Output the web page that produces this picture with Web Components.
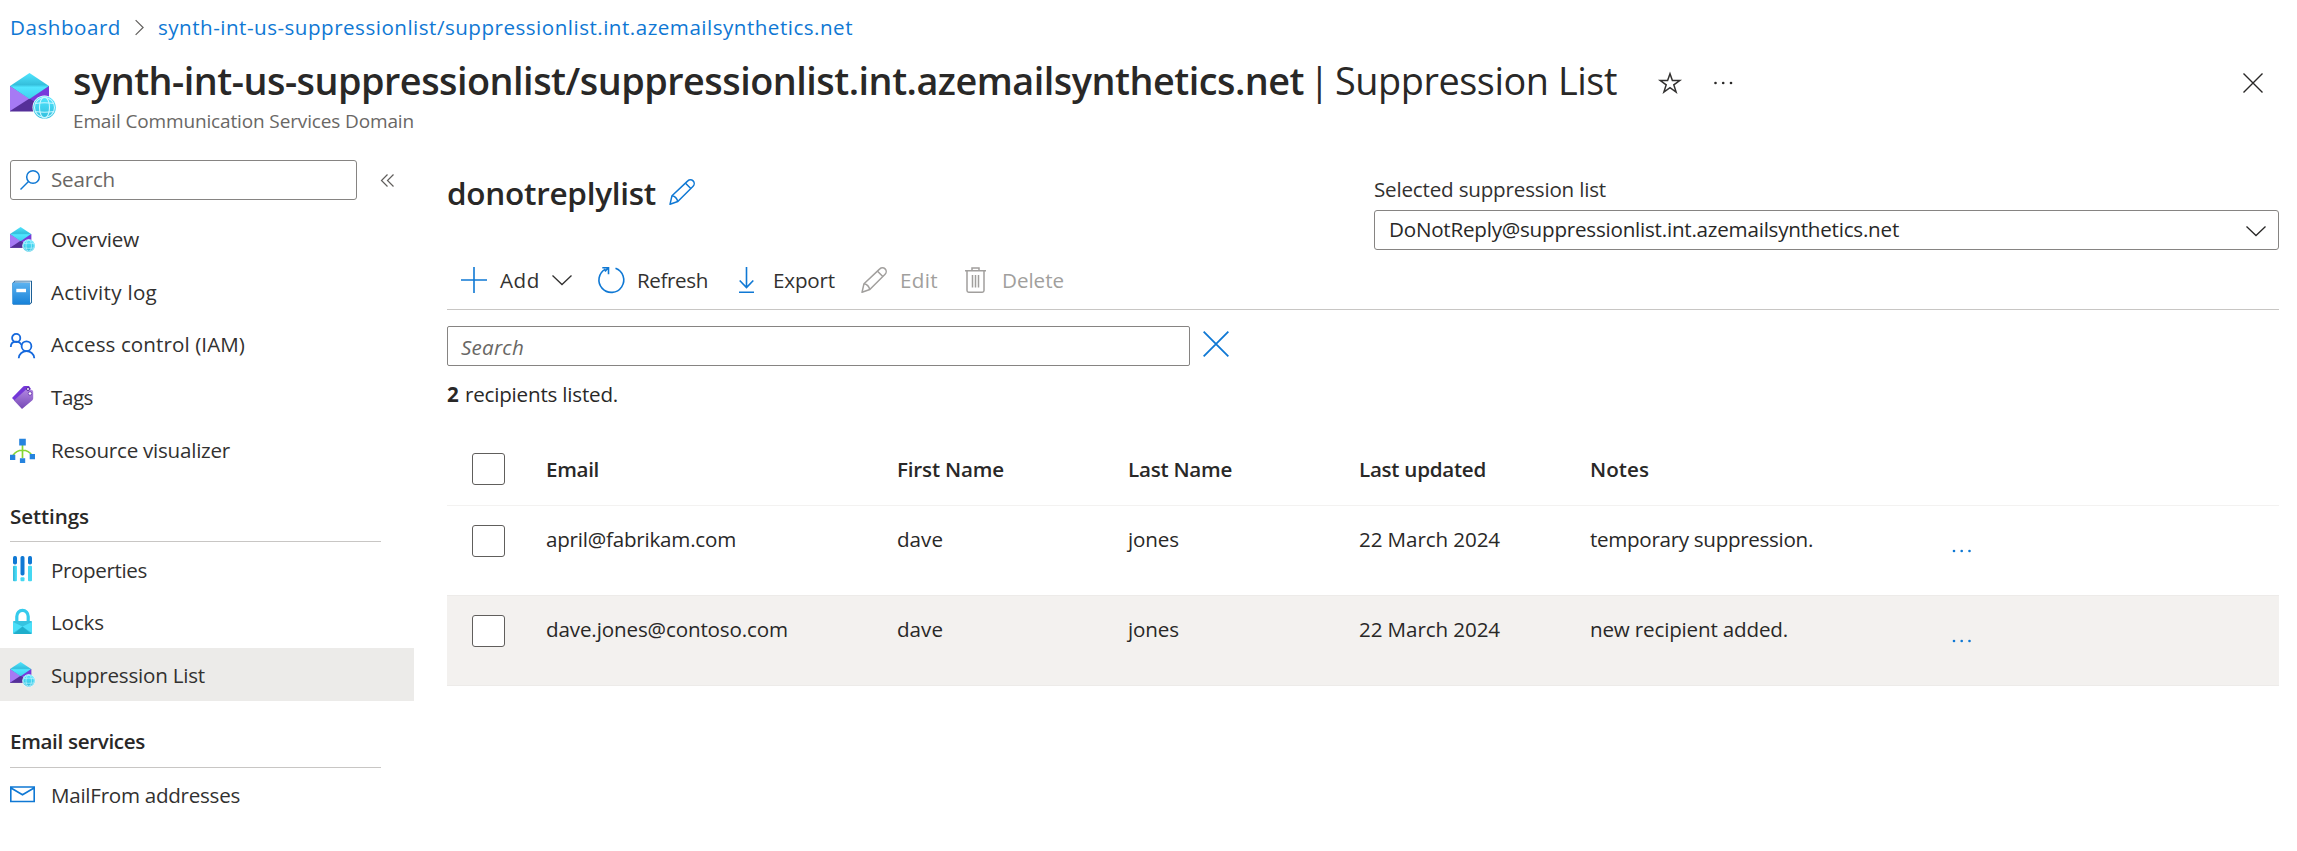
<!DOCTYPE html>
<html lang="en">
<head>
<meta charset="utf-8">
<title>Suppression List</title>
<style>
html,body{margin:0;background:#fff}
body{width:2297px;height:851px;overflow:hidden;font-family:"Open Sans","Noto Sans",sans-serif;font-size:20.6px;color:#323130}
</style>
</head>
<body>
<portal-page></portal-page>
<script>
const define = (name, css, html, setup) => customElements.define(name, class extends HTMLElement {
  connectedCallback() {
    if (this.shadowRoot) return;
    const root = this.attachShadow({ mode: 'open' });
    root.innerHTML = `<style>*{box-sizing:border-box}${css}</style>${typeof html === 'function' ? html(this) : html}`;
    if (setup) setup(this, root);
  }
});

// Single-line label tracked to an exact measure.
define('fit-text', ':host{display:inline-block;white-space:nowrap;flex:none}span{display:inline-block}', '<span><slot></slot></span>', (el, root) => {
  const w = +el.getAttribute('w'), span = root.querySelector('span');
  const n = el.textContent.length;
  el.style.width = w + 'px';
  span.style.letterSpacing = ((w - span.getBoundingClientRect().width) / n) + 'px';
});

const pencil = '<g fill="none" stroke="currentColor" stroke-width="1.5" stroke-linejoin="round"><path d="M1 25.3l2-8.600L18.800 1.900a3.700 3.700 0 0 1 5.300 5.300L8.800 22.500z"/><path d="M3 16.700q4.600 .8 5.800 5.800M16.500 4.200l5.300 5.300"/></g>';
const mail = `<defs><linearGradient id="a" x1="0" y1="0" x2="0" y2="1"><stop offset="0" stop-color="#50e6ff"/><stop offset=".45" stop-color="#35bfdc"/><stop offset=".55" stop-color="#50e6ff"/><stop offset="1" stop-color="#40d0ee"/></linearGradient><linearGradient id="g" x1="0" y1="0" x2="0" y2="1"><stop offset="0" stop-color="#50e6ff"/><stop offset="1" stop-color="#32bedd"/></linearGradient></defs>
<path d="M0 13h39v25.500H0z" fill="#552f99"/><path d="M39 13v25L19.500 25.500z" fill="#773adc"/><path d="M0 13v25L19.500 25.500z" fill="#a67af4"/><path d="M0 13L19.500 0 39 13 19.500 26z" fill="url(#a)"/>
<circle cx="34.500" cy="34.500" r="12" fill="#fff"/><circle cx="34.500" cy="34.500" r="11.300" fill="url(#g)"/><g fill="none" stroke="#c9f6ff" stroke-width="1.100"><ellipse cx="34.500" cy="34.500" rx="5" ry="10.500"/><circle cx="34.500" cy="34.500" r="10"/><path d="M25 30.500q9.500 -1.500 19 0M25 38.500q9.500 1.500 19 0"/></g>`;
const icons = {
  mail: ['0 0 46 46', mail],
  book: ['0 0 25 25', '<defs><linearGradient id="a" x1="0" y1="0" x2="0" y2="1"><stop offset="0" stop-color="#5bb2f0"/><stop offset="1" stop-color="#1681d8"/></linearGradient></defs><path d="M2.300 3.500L4.500.8H22v22l-2 1.700H3z" fill="#1b5f96"/><path d="M4 2.400L5 1.600h16v20.700l-1 1V2.800z" fill="#eef6fc"/><path d="M2.300 2.800H20v21.700H3.500a1.200 1.200 0 0 1-1.200-1.200z" fill="url(#a)"/><path d="M6.300 8.800H16v3.400H6.300z" fill="#fff"/>'],
  people: ['0 0 25 25', '<g fill="none" stroke="#1468dd" stroke-width="1.800"><circle cx="6.200" cy="5" r="4.100"/><circle cx="16.500" cy="13.200" r="4.900"/><path d="M.8 14c0-6.800 8.700-6.900 10.600-2M8.700 25.300c.5-9.500 15.100-9.500 15.600 0"/></g>'],
  tag: ['0 0 25 25', '<defs><linearGradient id="a" x1="0" y1="0" x2="0" y2="1"><stop offset="0" stop-color="#b287e2"/><stop offset="1" stop-color="#7548b5"/></linearGradient></defs><path d="M2 13L12.500 2.200Q13.400 1 15 1h4l2 3L5 16z" fill="#7436d8"/><path d="M4 15.500L16 4.500q1-.8 2.400-.4L22 5q1.200.4 1.200 1.800v6.500q0 1-.8 1.900L12 24z" fill="url(#a)"/><circle cx="18" cy="4" r="1.500" fill="#fff" stroke="#552b9a"/><circle cx="20" cy="8.500" r="1.800" fill="#fff" stroke="#7548b5"/>'],
  tree: ['0 0 25 25', '<g fill="none" stroke="#86d633" stroke-width="1.700"><path d="M12.500 7v13M3 17.500c4-7 15-7 19 0"/></g><g fill="#2583de"><path d="M9.200.8h6.600v6.600H9.200zM0 16.700h5.300V22H0zM19.700 16h5.300v5.300h-5.300zM9.900 20.300h5.300v4.700H9.900z"/></g>'],
  props: ['0 0 25 25', '<defs><linearGradient id="a"><stop offset="0" stop-color="#32b5d5"/><stop offset="1" stop-color="#50e6ff"/></linearGradient></defs><g fill="#0f78d4"><rect x="3" y="0" width="4" height="8.500" rx="1.700"/><rect x="10.500" y="0" width="4" height="19.500" rx="1.700"/><rect x="18" y="0" width="4" height="8.500" rx="1.700"/></g><rect x="3" y="9.800" width="4" height="15.500" rx="1" fill="url(#a)"/><rect x="10.500" y="21.200" width="4" height="4" rx="1" fill="#45d8f2"/><rect x="18" y="9.800" width="4" height="15.500" rx="1" fill="#45d8f2"/>'],
  lock: ['0 0 25 25', '<path d="M6.800 13V7.500a5.600 6 0 0 1 11.400 0V13" fill="none" stroke="#35cbec" stroke-width="3.200"/><rect x="3" y="12" width="19" height="13" rx="1" fill="#36c3e0"/><path d="M3 13v11l9.500-6.500zM22 13v11l-9.500-6.500z" fill="#50e6ff" opacity=".8"/><path d="M3.500 25l9-7.300 9 7.300z" fill="#1faecb"/>'],
  envelope: ['0 0 25 25', '<path d="M.8 5h23.400v14.500H.8zM1 6l11.500 6.700L24 6" fill="none" stroke="#0f78d4" stroke-width="1.600"/>'],
  pencil: ['0 0 26 26', pencil],
  search: ['0 0 20 20', '<g fill="none" stroke="#0f78d4" stroke-width="1.500"><circle cx="13" cy="7" r="6.300"/><path d="M8.500 11.500L.5 19.500"/></g>'],
  collapse: ['0 0 13 13', '<path d="M6.500.5l-6 6 6 6M12.500.5l-6 6 6 6" fill="none" stroke="#605e5c" stroke-width="1.200"/>'],
  crumb: ['0 0 10 18', '<path d="M.7.8L9 9 .7 17.200" fill="none" stroke="#605e5c" stroke-width="1.300"/>'],
  star: ['0 0 22 22', '<path d="M11 1.800l2.400 6.800h7.300l-5.900 4.200 2.300 7.300L11 15.700l-6.100 4.400 2.300-7.300L1.300 8.600h7.300z" fill="none" stroke="#323130" stroke-width="1.500"/>'],
  dots: ['0 0 18 4', '<g fill="currentColor"><circle cx="1.500" cy="2" r="1.300"/><circle cx="9.200" cy="2" r="1.300"/><circle cx="17" cy="2" r="1.300"/></g>'],
  close: ['0 0 20 20', '<path d="M.5.500l19 19M19.500.500l-19 19" fill="none" stroke="currentColor" stroke-width="1.400"/>'],
  plus: ['0 0 26 26', '<path d="M13 0v26M0 13h26" stroke="currentColor" stroke-width="1.600"/>'],
  chevron: ['0 0 20 10', '<path d="M.5.500L10 9.500 19.500.500" fill="none" stroke="currentColor" stroke-width="1.300"/>'],
  refresh: ['0 0 27 26', '<path d="M17.500 1.300a12.400 12.400 0 1 1-10.100.8M4.300.8h6.200v6.500M10 .9L7 4.600" fill="none" stroke="currentColor" stroke-width="1.600"/>'],
  download: ['0 0 15 26', '<path d="M7.500 0v20.500M.7 13.500l6.800 7 6.800-7M0 25.200h15" fill="none" stroke="currentColor" stroke-width="1.600"/>'],
  trash: ['0 0 21 26', '<path d="M0 3.700h21M7 3.700V1h7v2.700M2 3.700v19.800a1.700 1.700 0 0 0 1.700 1.700h13.600a1.700 1.700 0 0 0 1.700-1.700V3.700M7.500 8v12.500M10.500 8v12.500M13.500 8v12.500" fill="none" stroke="currentColor" stroke-width="1.500"/>']
};
define('ui-icon', ':host{display:block;flex:none}svg{display:block;width:100%;height:100%;overflow:visible}', el => {
  const [box, body] = icons[el.getAttribute('name')];
  return `<svg viewBox="${box}" aria-hidden="true">${body}</svg>`;
}, el => {
  el.style.width = el.getAttribute('w') + 'px';
  el.style.height = el.getAttribute('h') + 'px';
});

define('bread-crumbs', ':host{display:flex;align-items:center;height:54px;padding-left:10px;color:#0f78d4}ui-icon{margin:0 14px 0 14px}',
  '<fit-text w="111">Dashboard</fit-text><ui-icon name="crumb" w="9" h="17"></ui-icon><fit-text w="695">synth-int-us-suppressionlist/suppressionlist.int.azemailsynthetics.net</fit-text>');

define('page-header', `:host{display:flex;height:106px;padding-left:10px;color:#292827}
.logo{margin:19px 17px 0 0}.line{display:flex;height:54px;line-height:54px;font-size:37.8px}b{font-weight:600}
.sub{font-size:19px;line-height:26px;color:#696765}.star{margin:18px 0 0 42px}.dots{margin:27px 0 0 33px}.close{margin:19px 34px 0 auto}.bar{margin:0 9px 0 5px}`,
  `<ui-icon class="logo" name="mail" w="46" h="46"></ui-icon><div><div class="line"><b><fit-text w="1231">synth-int-us-suppressionlist/suppressionlist.int.azemailsynthetics.net</fit-text></b><fit-text class="bar" w="17">|</fit-text><fit-text w="282">Suppression List</fit-text><ui-icon class="star" name="star" w="22" h="22"></ui-icon><ui-icon class="dots" name="dots" w="18" h="4"></ui-icon></div><div class="sub"><fit-text w="341">Email Communication Services Domain</fit-text></div></div><ui-icon class="close" name="close" w="20" h="20"></ui-icon>`);

define('nav-item', ':host{display:flex;align-items:center;height:52.85px;padding-left:10px}:host([selected]){background:#ecebe9}ui-icon{margin-right:16px}fit-text{margin-top:var(--label-shift,0)}', el =>
  `<ui-icon name="${el.getAttribute('icon')}" w="25" h="25"></ui-icon><fit-text w="${el.getAttribute('w')}">${el.getAttribute('label')}</fit-text>`);
define('nav-heading', ':host{display:block;width:371px;height:65px;margin-left:10px;border-bottom:1px solid #c8c6c4;padding-top:22px;line-height:34px;font-weight:600;color:#292827}', el =>
  `<fit-text w="${el.getAttribute('w')}">${el.getAttribute('label')}</fit-text>`);

define('side-nav', `:host{display:block;width:414px}.top{display:flex;align-items:center;height:40px;margin:0 0 13px 10px}
.box{display:flex;align-items:center;width:347px;height:40px;border:1px solid #868482;border-radius:3px;padding-left:9px;color:#696765}.box ui-icon{margin-right:11px}.box fit-text{margin-bottom:2px}.c{margin-left:24px}
.upper{--label-shift:-2px}.lower{--label-shift:2px}`,
`<div class="top"><div class="box"><ui-icon name="search" w="20" h="20"></ui-icon><fit-text w="64">Search</fit-text></div><ui-icon class="c" name="collapse" w="13" h="13"></ui-icon></div>
<nav><nav-item icon="mail" w="88" label="Overview"></nav-item><nav-item icon="book" w="106" label="Activity log"></nav-item><nav-item class="upper" icon="people" w="194" label="Access control (IAM)"></nav-item><nav-item class="upper" icon="tag" w="42" label="Tags"></nav-item><nav-item class="upper" icon="tree" w="179" label="Resource visualizer"></nav-item>
<nav-heading w="79" label="Settings"></nav-heading><nav-item class="lower" icon="props" w="96" label="Properties"></nav-item><nav-item class="lower" icon="lock" w="53" label="Locks"></nav-item><nav-item class="lower" selected icon="mail" w="154" label="Suppression List"></nav-item>
<nav-heading style="height:67px;padding-top:23px" w="135" label="Email services"></nav-heading><nav-item class="lower" icon="envelope" w="189" label="MailFrom addresses"></nav-item></nav>`);

define('command-button', ':host{display:flex;align-items:center;height:40px;flex:none}:host([disabled]){color:#a19f9d}.i{color:#0f78d4}:host([disabled]) .i{color:#a19f9d}', el => {
  const a = n => el.getAttribute(n);
  return `<ui-icon class="i" name="${a('icon')}" w="${a('iw')}" h="26"></ui-icon><fit-text style="margin-left:${a('gap')}px" w="${a('w')}">${a('label')}</fit-text><slot></slot>`;
});
define('command-bar', ':host{display:flex;height:50px;border-bottom:1px solid #c8c6c4;padding-left:14px}',
`<command-button icon="plus" iw="26" gap="13" w="40" label="Add"><ui-icon style="margin-left:12px" name="chevron" w="20" h="10"></ui-icon></command-button>
<command-button style="margin-left:26px" icon="refresh" iw="27" gap="12" w="71" label="Refresh"></command-button>
<command-button style="margin-left:31px" icon="download" iw="15" gap="19" w="62" label="Export"></command-button>
<command-button disabled style="margin-left:26px" icon="pencil" iw="26" gap="13" w="38" label="Edit"></command-button>
<command-button disabled style="margin-left:27px" icon="trash" iw="21" gap="16" w="62" label="Delete"></command-button>`);

define('list-picker', ':host{display:block;width:905px}label{display:block;height:35px;line-height:28px}.box{display:flex;align-items:center;height:40px;border:1px solid #868482;border-radius:3px;padding:0 12px 2px 14px;color:#292827}.box ui-icon{margin:3px 0 0 auto}',
'<label><fit-text w="232">Selected suppression list</fit-text></label><div class="box"><fit-text w="510">DoNotReply@suppressionlist.int.azemailsynthetics.net</fit-text><ui-icon name="chevron" w="20" h="10"></ui-icon></div>');

define('check-box', ':host{display:block;width:33px;height:32px;border:1px solid #605e5c;border-radius:3px;background:#fff}', '');
define('table-row', `:host{display:grid;grid-template-columns:74px 351px 231px 231px 231px 361px 1fr;height:90px;padding:0 0 0 25px;border-bottom:1px solid #edebe9;color:#292827}
:host([head]){height:71px;font-weight:600;border-color:#f3f2f1}:host([alt]){background:#f3f1ef}
check-box{margin-top:19px}:host([head]) check-box{margin-top:18px}fit-text{line-height:34px;margin-top:16px}:host([head]) fit-text{margin-top:17px}ui-icon{margin:43px 0 0 1px;color:#0f78d4}`,
el => '<check-box></check-box>' + JSON.parse(el.getAttribute('cells')).map(([t, w]) => `<fit-text w="${w}">${t}</fit-text>`).join('') + (el.hasAttribute('head') ? '' : '<ui-icon name="dots" w="19" h="4"></ui-icon>'));

define('suppression-list', `:host{display:block;margin-left:33px;width:1832px}.top{display:flex;justify-content:space-between;height:100px}
h2{margin:0;display:flex;height:66px;line-height:66px;font-size:31.500px;font-weight:600;color:#292827}h2 ui-icon{margin:19px 0 0 13px;color:#0f78d4}list-picker{margin-top:15px}
.find{display:flex;margin-top:16px;height:40px}.box{width:743px;border:1px solid #868482;border-radius:2px;padding:2px 0 0 13px;line-height:36px;font-style:italic;color:#696765}.find ui-icon{margin:5px 0 0 13px;color:#0f78d4}
.count{display:flex;height:69px;padding-top:12px;line-height:32px;color:#292827}.count b{font-weight:700;margin-right:6px}`,
`<div class="top"><h2><fit-text w="209">donotreplylist</fit-text><ui-icon name="pencil" w="26" h="26"></ui-icon></h2><list-picker></list-picker></div>
<command-bar></command-bar>
<div class="find"><div class="box"><fit-text w="63">Search</fit-text></div><ui-icon name="close" w="26" h="26"></ui-icon></div>
<div class="count"><b><fit-text w="12">2</fit-text></b><fit-text w="153">recipients listed.</fit-text></div>
<table-row head cells='[["Email",53],["First Name",107],["Last Name",104],["Last updated",127],["Notes",59]]'></table-row>
<table-row cells='[["april@fabrikam.com",190],["dave",46],["jones",51],["22 March 2024",141],["temporary suppression.",223]]'></table-row>
<table-row alt cells='[["dave.jones@contoso.com",242],["dave",46],["jones",51],["22 March 2024",141],["new recipient added.",198]]'></table-row>`);

define('portal-page', ':host{display:block;width:2297px;height:851px;background:#fff}main{display:flex}', '<bread-crumbs></bread-crumbs><page-header></page-header><main><side-nav></side-nav><suppression-list></suppression-list></main>');
</script>
</body>
</html>
